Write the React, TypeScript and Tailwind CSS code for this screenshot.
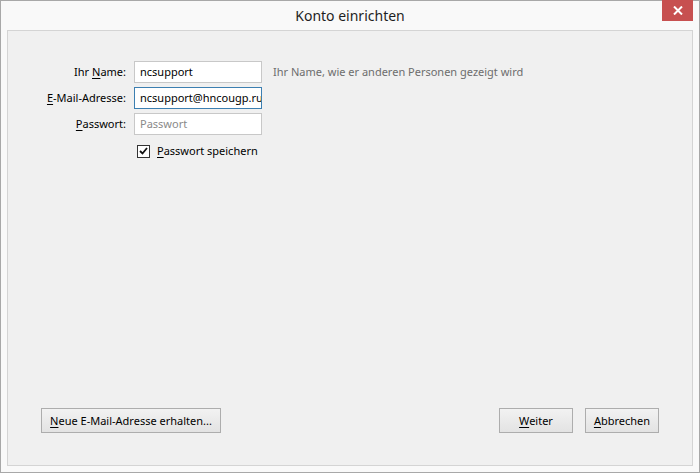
import React from 'react';

const font = { fontFamily: '"Noto Sans", "Segoe UI", sans-serif' };

// Label with an underlined access key
const AccessLabel = ({ k, rest }: { k: string; rest: string }) => (
  <span>
    <span className="underline underline-offset-2">{k}</span>
    {rest}
  </span>
);

const Button = ({ children, width }: { children: React.ReactNode; width: string }) => (
  <button
    className={`${width} h-[25px] border border-[#adadad] bg-gradient-to-b from-[#f2f2f2] to-[#e3e3e3] text-[11px] text-black leading-none`}
  >
    {children}
  </button>
);

export default function App() {
  return (
    <div
      style={font}
      className="w-[700px] h-[473px] border border-[#a8a8a8] bg-[#f9f9f9] flex flex-col text-[11px] text-black"
    >
      {/* Title bar */}
      <div className="relative h-[29px] flex items-center justify-center">
        <span className="text-[14px] text-[#1e1e1e]">Konto einrichten</span>
        <div className="absolute right-[6px] top-[-1px] w-[31px] h-[21px] bg-[#c75050] flex items-center justify-center">
          <svg width="10" height="9" viewBox="0 0 10 9">
            <path d="M1 0.5 L9 8.5 M9 0.5 L1 8.5" stroke="white" strokeWidth="2" />
          </svg>
        </div>
      </div>

      {/* Content panel */}
      <div className="flex-1 mx-[6px] mb-[6px] border border-[#d4d4d4] bg-[#f0f0f0] flex flex-col">
        <div className="pt-[30px] grid grid-cols-[118px_128px_auto] gap-x-2 gap-y-1 items-center">
          <div className="text-right">
            Ihr <AccessLabel k="N" rest="ame:" />
          </div>
          <div className="h-[22px] border border-[#c8c8c8] bg-white px-[5px] flex items-center overflow-hidden whitespace-nowrap">
            ncsupport
          </div>
          <div className="pl-[3px] text-[#6d6d6d]">Ihr Name, wie er anderen Personen gezeigt wird</div>

          <div className="text-right">
            <AccessLabel k="E" rest="-Mail-Adresse:" />
          </div>
          <div className="h-[22px] border border-[#3c7fb1] bg-white pl-[5px] flex items-center overflow-hidden whitespace-nowrap">
            ncsupport@hncougp.ru
          </div>
          <div />

          <div className="text-right">
            <AccessLabel k="P" rest="asswort:" />
          </div>
          <div className="h-[22px] border border-[#c8c8c8] bg-white px-[5px] flex items-center overflow-hidden whitespace-nowrap text-[#8a8a8a]">
            Passwort
          </div>
          <div />
        </div>

        <div className="mt-[8px] ml-[129px] flex items-center gap-[7px]">
          <div className="w-[13px] h-[13px] border border-[#333] bg-white flex items-center justify-center">
            <svg width="9" height="8" viewBox="0 0 9 8">
              <path d="M1 4 L3.5 6.5 L8 1" stroke="#111" strokeWidth="1.8" fill="none" />
            </svg>
          </div>
          <AccessLabel k="P" rest="asswort speichern" />
        </div>

        <div className="flex-1" />

        {/* Bottom buttons */}
        <div className="flex items-center px-[33px] pb-[32px]">
          <Button width="w-[180px]">
            <AccessLabel k="N" rest="eue E-Mail-Adresse erhalten..." />
          </Button>
          <div className="flex-1" />
          <div className="flex gap-[12px]">
            <Button width="w-[74px]">
              <AccessLabel k="W" rest="eiter" />
            </Button>
            <Button width="w-[74px]">
              <AccessLabel k="A" rest="bbrechen" />
            </Button>
          </div>
        </div>
      </div>
    </div>
  );
}
